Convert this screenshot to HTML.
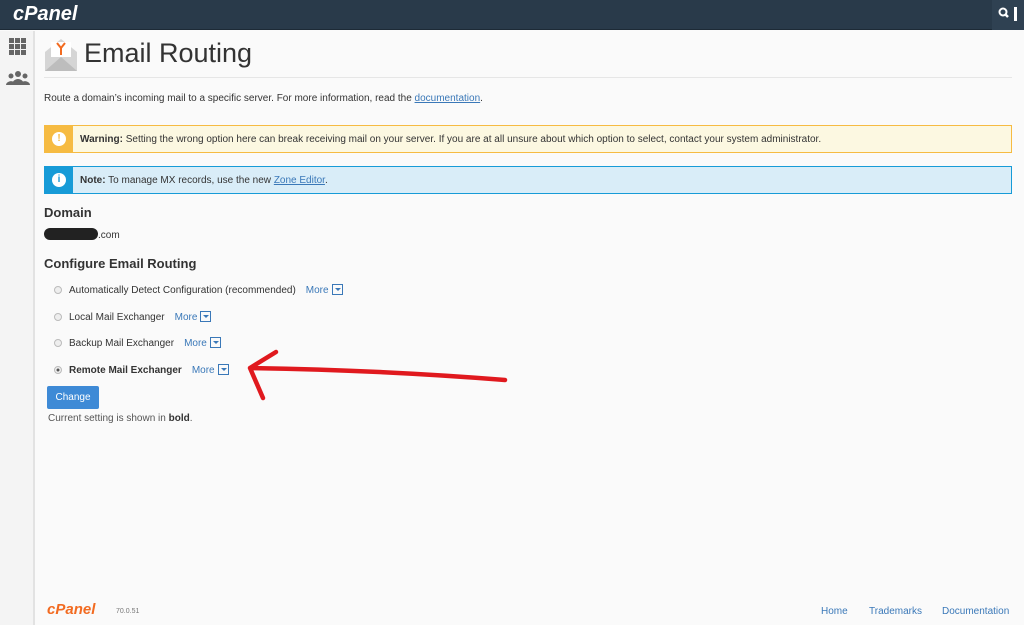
<!DOCTYPE html>
<html><head><meta charset="utf-8"><style>
*{box-sizing:border-box}
body{margin:0;width:1024px;height:625px;overflow:hidden;background:#fafafa;font-family:"Liberation Sans",sans-serif;color:#333;position:relative}
.top{position:absolute;left:0;top:0;width:1024px;height:30px;background:#293a4a;border-bottom:1px solid #1d2a36}
.logo{position:absolute;left:13px;top:3px;color:#fff;font-weight:bold;font-style:italic;font-size:20px;letter-spacing:0}
.srch{position:absolute;right:0;top:0;width:32px;height:30px;background:#2f4152}
.side{position:absolute;left:0;top:31px;width:35px;height:594px;background:#f4f4f4;border-right:2px solid #e2e2e2}
.main{position:absolute;left:44px;top:31px;width:968px}
h1{font-weight:normal;font-size:27px;margin:0;position:absolute;left:40px;top:7px;color:#333}
.hr{position:absolute;left:0;top:46px;width:968px;border-top:1px solid #e6e6e6}
.p{position:absolute;font-size:10px}
a{color:#3a78b8}
.al{position:absolute;left:0;width:968px;height:28px;font-size:10px;line-height:27px;border:1px solid}
.al .ic{position:absolute;left:0;top:0;width:28px;height:26px}
.al .ic span{position:absolute;left:7px;top:6px;width:14px;height:14px;border-radius:50%;background:#fff;font-size:10px;line-height:14px;text-align:center;font-weight:bold}
.al .t{position:absolute;left:35px;top:0}
h3{position:absolute;margin:0;font-size:13px;font-weight:bold;color:#333}
.r{position:absolute;left:10px;font-size:10px;color:#333}
.r i{display:inline-block;width:8px;height:8px;border-radius:50%;border:1px solid #bbb;background:#eee;margin-right:7px;vertical-align:-1px}
.m{color:#3a78b8;margin-left:10px}
.m b{display:inline-block;width:11px;height:11px;border:1px solid #3a78b8;vertical-align:-2px;margin-left:3px;position:relative}
.m b:after{content:"";position:absolute;left:2px;top:3px;border-left:3px solid transparent;border-right:3px solid transparent;border-top:3px solid #3a78b8}
.btn{position:absolute;left:3px;top:355px;width:52px;height:23px;background:#3e8ad6;color:#fff;font-size:10px;line-height:23px;text-align:center;border-radius:2px}
.foot a{position:absolute;top:606px;font-size:10px;text-decoration:none;color:#3a78b8}
</style></head><body>
<div class="top"><div class="logo">cPanel</div><div class="srch"><svg width="32" height="30"><circle cx="11" cy="12" r="3.5" stroke="#fff" stroke-width="2" fill="none"/><line x1="13.5" y1="14.5" x2="16" y2="17" stroke="#fff" stroke-width="2.5"/><rect x="22" y="7" width="3" height="14" fill="#fff"/></svg></div></div>
<div class="side"><svg width="35" height="60"><g fill="#666"><rect x="9" y="7" width="5" height="5"/><rect x="15" y="7" width="5" height="5"/><rect x="21" y="7" width="5" height="5"/><rect x="9" y="13" width="5" height="5"/><rect x="15" y="13" width="5" height="5"/><rect x="21" y="13" width="5" height="5"/><rect x="9" y="19" width="5" height="5"/><rect x="15" y="19" width="5" height="5"/><rect x="21" y="19" width="5" height="5"/><circle cx="18" cy="43" r="3"/><circle cx="11" cy="45" r="2.5"/><circle cx="25" cy="45" r="2.5"/><path d="M12 54a6 6 0 0 1 12 0z"/><path d="M6 54a5 4 0 0 1 8-3v3z"/><path d="M22 54v-3a5 4 0 0 1 8 3z"/></g></svg></div>
<div class="main">
<svg style="position:absolute;left:0;top:7px" width="34" height="34"><path d="M1 14 L17 1 L33 14 V33 H1z" fill="#d5d5d5"/><path d="M1 33 L17 19 L33 33z" fill="#bdbdbd"/><rect x="7" y="4" width="20" height="15" fill="#fff"/><path d="M17 17V10M17 10L13 5M17 10L21 5" stroke="#f26b21" stroke-width="2" fill="none"/></svg>
<h1>Email Routing</h1>
<div class="hr"></div>
<div class="p" style="left:0;top:62px">Route a domain’s incoming mail to a specific server. For more information, read the <a href="#">documentation</a>.</div>
<div class="al" style="top:94px;background:#fcf8e1;border-color:#f6bb42"><div class="ic" style="background:#f6bb42"><span style="color:#f6bb42">!</span></div><div class="t"><b>Warning:</b> Setting the wrong option here can break receiving mail on your server. If you are at all unsure about which option to select, contact your system administrator.</div></div>
<div class="al" style="top:135px;background:#d9edf8;border-color:#179bd7"><div class="ic" style="background:#179bd7"><span style="color:#179bd7">i</span></div><div class="t"><b>Note:</b> To manage MX records, use the new <a href="#">Zone Editor</a>.</div></div>
<h3 style="left:0;top:174px">Domain</h3>
<div class="p" style="left:0;top:197px"><span style="display:inline-block;width:54px;height:12px;background:#222;border-radius:6px;vertical-align:-2px"></span>.com</div>
<h3 style="left:0;top:225px">Configure Email Routing</h3>
<div class="r" style="top:253px"><i></i>Automatically Detect Configuration (recommended)<span class="m">More<b></b></span></div>
<div class="r" style="top:280px"><i></i>Local Mail Exchanger<span class="m">More<b></b></span></div>
<div class="r" style="top:306px"><i></i>Backup Mail Exchanger<span class="m">More<b></b></span></div>
<div class="r" style="top:333px"><i style="background:radial-gradient(#555 30%,#eee 40%)"></i><b>Remote Mail Exchanger</b><span class="m">More<b></b></span></div>
<div class="btn">Change</div>
<div class="p" style="left:4px;top:382px;color:#555">Current setting is shown in <b style="color:#333">bold</b>.</div>
</div>
<svg style="position:absolute;left:0;top:0" width="1024" height="625"><path d="M505 380 Q380 370 250 368 M250 368 L276 352 M250 368 L263 398" stroke="#e0191e" stroke-width="4.5" fill="none" stroke-linecap="round"/></svg>
<div class="foot"><div style="position:absolute;left:47px;top:601px;color:#f26b21;font-weight:bold;font-style:italic;font-size:15px">cPanel</div><div style="position:absolute;left:116px;top:608px;font-size:7px;color:#777">70.0.51</div>
<a href="#" style="left:821px">Home</a><a href="#" style="left:869px">Trademarks</a><a href="#" style="left:942px">Documentation</a></div>
</body></html>
